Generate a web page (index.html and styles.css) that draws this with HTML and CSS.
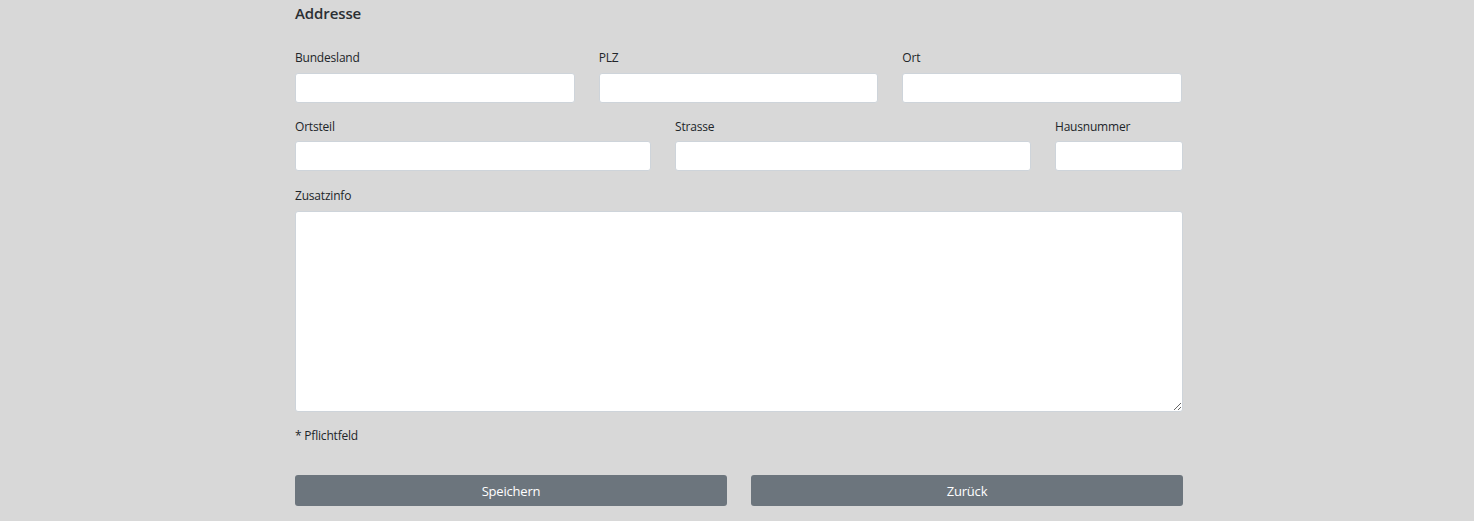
FILE: index.html
```html
<!DOCTYPE html>
<html lang="de">
<head>
<meta charset="utf-8">
<title>Addresse</title>
<link rel="stylesheet" href="styles.css">
</head>
<body>
<main class="page">
  <h2 class="title">Addresse</h2>
  <div class="row row-3">
    <div class="field"><label>Bundesland</label><input type="text"></div>
    <div class="field"><label>PLZ</label><input type="text"></div>
    <div class="field"><label>Ort</label><input type="text"></div>
  </div>
  <div class="row row-552">
    <div class="field"><label>Ortsteil</label><input type="text"></div>
    <div class="field"><label>Strasse</label><input type="text"></div>
    <div class="field"><label>Hausnummer</label><input type="text"></div>
  </div>
  <div class="field"><label>Zusatzinfo</label><textarea></textarea></div>
  <p class="note">* Pflichtfeld</p>
  <div class="row row-2">
    <button class="btn">Speichern</button>
    <button class="btn">Zurück</button>
  </div>
</main>
</body>
</html>
```

FILE: styles.css
```css
html, body {
  margin: 0;
  padding: 0;
  background: #d8d8d8;
}
body {
  font-family: "Open Sans", "Noto Sans", sans-serif;
  font-size: 12px;
  color: #212529;
}
.page {
  width: 888px;
  margin: 0 auto;
  padding-top: 2px;
  position: relative;
  left: 2px;
}
.title {
  margin: 0 0 25px;
  font-size: 15px;
  line-height: 22px;
  font-weight: 600;
  color: #2b2f33;
  letter-spacing: -0.1px;
}
.row {
  display: grid;
  column-gap: 24px;
}
.row-3 { grid-template-columns: 1fr 1fr 1fr; margin-right: 1px; }
.row-552 { grid-template-columns: 356px 356px 1fr; }
.row-2 { grid-template-columns: 1fr 1fr; }
.field {
  display: flex;
  flex-direction: column;
  margin-bottom: 15px;
}
.field label {
  line-height: 18px;
  margin-bottom: 6px;
  letter-spacing: -0.2px;
}
.row-552 .field label { margin-bottom: 5px; }
.row-552 .field { margin-bottom: 16px; }
input, textarea {
  box-sizing: border-box;
  width: 100%;
  height: 30px;
  background: #fff;
  border: 1px solid #ced4da;
  border-radius: 3px;
  margin: 0;
  padding: 4px 8px;
  font: inherit;
}
textarea {
  height: 201px;
  resize: vertical;
}
.note {
  margin: 0 0 30px;
  line-height: 18px;
  letter-spacing: -0.2px;
}
.btn {
  height: 31px;
  border: none;
  border-radius: 3px;
  background: #6c757d;
  color: #fff;
  font: inherit;
  font-size: 13px;
  letter-spacing: -0.2px;
  padding: 0;
}
```
